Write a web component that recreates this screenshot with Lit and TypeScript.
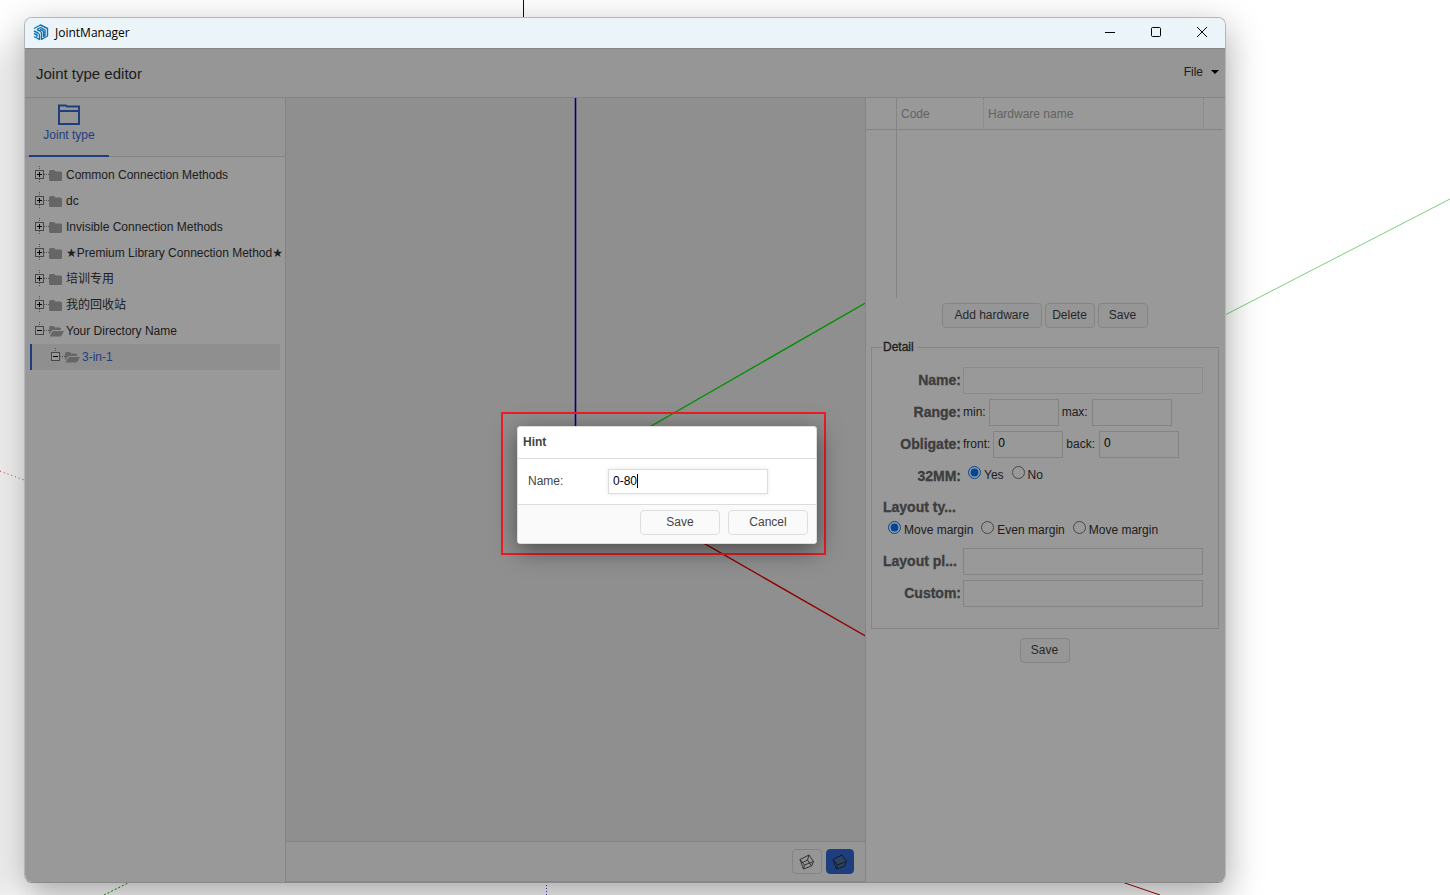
import { LitElement, html, css, svg } from "lit";
import { customElement, state, property } from "lit/decorators.js";

interface TreeNode {
  label: string;
  open?: boolean;
  depth?: number;
  selected?: boolean;
}

const TREE: TreeNode[] = [
  { label: "Common Connection Methods" },
  { label: "dc" },
  { label: "Invisible Connection Methods" },
  { label: "★Premium Library Connection Method★" },
  { label: "培训专用" },
  { label: "我的回收站" },
  { label: "Your Directory Name", open: true },
  { label: "3-in-1", open: true, depth: 1, selected: true },
];

const controls = css`
  * {
    box-sizing: border-box;
  }
  button,
  input {
    font: inherit;
    color: inherit;
    margin: 0;
  }
  .btn {
    height: 25px;
    padding: 0 12px;
    border: 1px solid #ddd;
    border-radius: 4px;
    background: #fafafa;
    color: #444;
    line-height: 22px;
    padding-bottom: 1px;
    white-space: nowrap;
  }
  .box {
    height: 27px;
    padding: 0 4px 2px;
    border: 1px solid #ddd;
    background: #fff;
    color: #000;
    outline: none;
    border-radius: 0;
    min-width: 0;
  }
`;

@customElement("joint-tree")
export class JointTree extends LitElement {
  static styles = [
    controls,
    css`
      :host {
        display: block;
        padding: 5px 5px 0;
      }
      .list {
        margin: 0;
        padding: 0;
        list-style: none;
      }
      .node {
        display: flex;
        align-items: center;
        width: 100%;
        height: 26px;
        padding: 0 0 0 4px;
        border: 0;
        background: none;
        color: #333;
        white-space: nowrap;
        text-align: left;
      }
      .nested {
        padding-left: 20px;
      }
      .selected {
        background: #eee;
        color: #3a6ad4;
        box-shadow: inset 2px 0 #3468d4;
      }
      .fork,
      .folder {
        flex: none;
        display: block;
        overflow: visible;
      }
      .folder {
        margin-right: 3px;
      }
    `,
  ];

  private fork(open: boolean, last: boolean) {
    return html`<svg class="fork" width="15" height="18" viewBox="0 0 15 18" shape-rendering="crispEdges" aria-hidden="true">
      <path d="M5.5 0v4M10 8.5h5" stroke="#888" stroke-dasharray="1 1" />
      ${last ? "" : svg`<path d="M5.5 13v4" stroke="#888" stroke-dasharray="1 1" />`}
      <rect x="1.5" y="4.5" width="8" height="8" fill="#fff" stroke="#777" />
      <path d="M3 8.5h5" stroke="#000" />
      ${open ? "" : svg`<path d="M5.5 6v5" stroke="#000" />`}
    </svg>`;
  }

  private folder(open: boolean) {
    return open
      ? html`<svg class="folder" width="14" height="16" viewBox="0 0 14 16" aria-hidden="true">
          <path d="M0 11.500V4.500Q0 3 1.500 3H4.500Q5.500 3 6 4.500H10.500Q12 4.500 12 6V7H4.500Q3 7 2 8.500Z" fill="#aaa" />
          <path d="M0.500 13.500L3 9Q3.500 8 4.500 8H14.500Q15 8 14.500 9L12.500 12.500Q12 13.500 11 13.500Z" fill="#aaa" />
        </svg>`
      : html`<svg class="folder" width="14" height="16" viewBox="0 0 14 16" aria-hidden="true">
          <path d="M0 4.500Q0 3 1.500 3H4.500Q6 3 6.500 4.500H11.500Q13 4.500 13 6V12.500Q13 14 11.500 14H1.500Q0 14 0 12.500Z" fill="#aaa" />
        </svg>`;
  }

  render() {
    return html`<ul class="list">
      ${TREE.map(
        (n) => html`<li>
          <button class="node ${n.depth ? "nested" : ""} ${n.selected ? "selected" : ""}">
            ${this.fork(!!n.open, !!n.open)}${this.folder(!!n.open)}<span>${n.label}</span>
          </button>
        </li>`
      )}
    </ul>`;
  }
}

@customElement("model-view")
export class ModelView extends LitElement {
  static styles = [
    controls,
    css`
      :host {
        display: flex;
        flex-direction: column;
        min-width: 0;
      }
      .scene {
        flex: 1;
        min-height: 0;
        width: 100%;
        background: #efefef;
        display: block;
      }
      .bar {
        display: flex;
        justify-content: flex-end;
        gap: 4px;
        height: 41px;
        padding: 7px 11px 0 0;
        border-top: 1px solid #ddd;
        border-bottom: 1px solid #ddd;
        background: #fafafa;
      }
      .tool {
        display: flex;
        align-items: center;
        justify-content: center;
        width: 30px;
        height: 25px;
        padding: 0;
        border: 1px solid #ddd;
        border-radius: 4px;
        background: #fafafa;
      }
      .active {
        width: 28px;
        border-color: #3468d4;
        background: #3468d4;
      }
    `,
  ];

  render() {
    return html`
      <svg class="scene" viewBox="-290 -372 580 744" preserveAspectRatio="xMidYMid slice" aria-label="Axes">
        <path d="M0 0L0 -800" stroke="#0000d0" stroke-width="1.600" />
        <path d="M0 0L700 -402" stroke="#00f000" stroke-width="1.400" />
        <path d="M0 0L700 402" stroke="#f00000" stroke-width="1.400" />
      </svg>
      <div class="bar">
        <button class="tool" aria-label="Wireframe">
          <svg width="16" height="16" viewBox="0 0 16 16" fill="none" stroke="#444" stroke-width="0.900" stroke-linejoin="round">
            <path d="M1 5.500L10 1L14.500 7.500L12.500 12L4.500 15Z M1 5.500L5.500 11L14.500 7.500M5.500 11L4.500 15M10 1L8.500 6L2.500 9M8.500 6L12.500 12" />
          </svg>
        </button>
        <button class="tool active" aria-label="Solid">
          <svg width="16" height="16" viewBox="0 0 16 16" fill="#4a7098" stroke="#1b2c50" stroke-linejoin="round">
            <path d="M1 5.500L10 1L14.500 7.500L12.500 12L4.500 15Z" />
            <path d="M4.500 15L5.500 11L14.500 7.500M5.500 11L1 5.500" fill="none" />
          </svg>
        </button>
      </div>
    `;
  }
}

@customElement("hardware-panel")
export class HardwarePanel extends LitElement {
  static styles = [
    controls,
    css`
      :host {
        display: block;
        border-left: 1px solid #ddd;
        background: #fff;
      }
      .grid {
        width: 100%;
        height: 200px;
        padding-right: 2px;
      }
      .table {
        width: 100%;
        height: 100%;
        border-collapse: separate;
        border-spacing: 0;
        table-layout: fixed;
      }
      .table th {
        height: 32px;
        padding: 0 4px;
        border-bottom: 1px solid #ddd;
        border-right: 1px dotted #ddd;
        color: #a6a6a6;
        font-weight: normal;
        text-align: left;
      }
      .table td {
        padding: 0;
      }
      .table .num {
        width: 31px;
        border-right: 1px solid #ddd;
      }
      .table .code {
        width: 87px;
      }
      .table .end {
        width: 19px;
        border-right: 0;
      }
      .actions {
        display: flex;
        justify-content: center;
        gap: 3px;
        padding: 5px 2px 0 0;
      }
      .small {
        width: 50px;
        padding-left: 0;
        padding-right: 0;
      }
      .wide {
        width: 100px;
      }
      .detail {
        margin: 11px 6px 0 5px;
        padding: 9px 15px 19px 11px;
        border: 1px solid #ddd;
        min-width: 0;
      }
      .legend {
        padding: 0 3px 0 1px;
        color: #333;
        font-size: 12px;
        line-height: 16px;
        -webkit-text-stroke: 0.3px #333;
        margin-left: -1px;
      }
      .row {
        display: flex;
        align-items: center;
        height: 32px;
        color: #333;
      }
      .name {
        width: 80px;
        flex: none;
        padding-right: 2px;
        text-align: right;
        font-weight: bold;
        font-size: 14px;
        color: #666;
        -webkit-text-stroke: 0.3px #666;
        white-space: nowrap;
      }
      .cut {
        text-align: left;
      }
      .fill {
        flex: 1;
      }
      .faint {
        border-color: #e8e8e8;
      }
      .a {
        width: 70px;
        margin: 0 3px;
      }
      .b {
        width: 80px;
        margin-left: 4px;
      }
      .options {
        display: flex;
        gap: 8px;
        padding: 0 0 4px 5px;
      }
      .under {
        height: 24px;
        align-items: flex-start;
      }
      .options label {
        display: flex;
        gap: 3px;
        align-items: flex-start;
        line-height: 16px;
        white-space: nowrap;
      }
      .options span {
        padding-top: 1px;
      }
      .radio {
        width: 13px;
        height: 13px;
        accent-color: #0075ff;
      }
      .title {
        height: 29px;
      }
      .foot {
        padding-top: 9px;
      }
    `,
  ];

  render() {
    return html`
      <div class="grid">
        <table class="table">
          <thead>
            <tr>
              <th class="num" aria-label="Number"></th>
              <th class="code">Code</th>
              <th>Hardware name</th>
              <th class="end" aria-label="More"></th>
            </tr>
          </thead>
          <tbody>
            <tr>
              <td class="num"></td>
              <td></td>
              <td></td>
              <td></td>
            </tr>
          </tbody>
        </table>
      </div>
      <div class="actions">
        <button class="btn wide">Add hardware</button>
        <button class="btn small">Delete</button>
        <button class="btn small">Save</button>
      </div>
      <fieldset class="detail">
        <legend class="legend">Detail</legend>
        <div class="row">
          <label class="name" for="name">Name:</label>
          <input id="name" class="box fill faint" />
        </div>
        <div class="row">
          <span class="name">Range:</span>
          <label for="min">min:</label><input id="min" class="box a" />
          <label for="max">max:</label><input id="max" class="box b" />
        </div>
        <div class="row">
          <span class="name">Obligate:</span>
          <label for="front">front:</label><input id="front" class="box a" value="0" />
          <label for="back">back:</label><input id="back" class="box b" value="0" />
        </div>
        <div class="row">
          <span class="name">32MM:</span>
          <div class="options">
            <label><input class="radio" type="radio" name="mm" checked /><span>Yes</span></label>
            <label><input class="radio" type="radio" name="mm" /><span>No</span></label>
          </div>
        </div>
        <div class="row title"><span class="name cut">Layout ty...</span></div>
        <div class="row under">
          <div class="options">
            <label><input class="radio" type="radio" name="layout" checked /><span>Move margin</span></label>
            <label><input class="radio" type="radio" name="layout" /><span>Even margin</span></label>
            <label><input class="radio" type="radio" name="layout" /><span>Move margin</span></label>
          </div>
        </div>
        <div class="row">
          <label class="name cut" for="plan">Layout pl...</label>
          <input id="plan" class="box fill" />
        </div>
        <div class="row">
          <label class="name" for="custom">Custom:</label>
          <input id="custom" class="box fill" />
        </div>
      </fieldset>
      <div class="actions foot"><button class="btn small">Save</button></div>
    `;
  }
}

@customElement("hint-dialog")
export class HintDialog extends LitElement {
  @property() value = "";

  static styles = [
    controls,
    css`
      :host {
        display: block;
      }
      .dialog {
        width: 300px;
        border: 1px solid #ddd;
        border-radius: 3px;
        background: #fff;
        box-shadow: 1px 6px 24px rgba(0, 0, 0, 0.5);
        overflow: hidden;
        color: #444;
      }
      .title {
        margin: 0;
        height: 32px;
        padding-left: 5px;
        border-bottom: 1px solid #ddd;
        font-size: 12px;
        font-weight: bold;
        line-height: 30px;
      }
      .body {
        display: flex;
        align-items: center;
        height: 45px;
        padding-left: 10px;
      }
      .body label {
        width: 80px;
        padding-bottom: 2px;
      }
      .field {
        position: relative;
        display: flex;
      }
      .caret {
        position: absolute;
        left: 29px;
        top: 5px;
        width: 1px;
        height: 14px;
        background: #000;
      }
      .entry {
        width: 160px;
        height: 25px;
        box-shadow: 0 0 4px rgba(0, 0, 0, 0.1);
        caret-color: transparent;
      }
      .foot {
        display: flex;
        justify-content: flex-end;
        gap: 8px;
        height: 39px;
        padding: 5px 8px 0 0;
        border-top: 1px solid #ddd;
        background: #fafafa;
      }
      .foot .btn {
        width: 80px;
      }
    `,
  ];

  render() {
    return html`<section class="dialog" role="dialog" aria-labelledby="t">
      <h2 class="title" id="t">Hint</h2>
      <div class="body">
        <label for="v">Name:</label>
        <div class="field">
          <input id="v" class="box entry" .value=${this.value} />
          <span class="caret"></span>
        </div>
      </div>
      <div class="foot">
        <button class="btn">Save</button>
        <button class="btn">Cancel</button>
      </div>
    </section>`;
  }
}

@customElement("app-root")
export class AppRoot extends LitElement {
  @state() private draft = "0-80";

  static styles = [
    controls,
    css`
      :host {
        display: block;
        font: 12px/16px "Liberation Sans", "DejaVu Sans", "Noto Sans CJK SC", Arial, sans-serif;
        color: #333;
      }
      .desktop {
        position: relative;
        display: flex;
        height: 100vh;
        padding: 17px 224px 12px 24px;
        overflow: hidden;
        background: #fff;
      }
      .backdrop {
        position: absolute;
        inset: 0;
        width: 100%;
        height: 100%;
      }
      .neighbour {
        position: absolute;
        left: -20px;
        top: 50px;
        bottom: -20px;
        width: 20px;
        box-shadow: 0 0 30px rgba(0, 0, 0, 0.15);
      }
      .window {
        position: relative;
        flex: 1;
        min-width: 0;
        display: flex;
        flex-direction: column;
        border: 1px solid #b4b6b8;
        border-bottom-color: #8a8a8a;
        border-radius: 8px;
        overflow: hidden;
        background: #fff;
        box-shadow: 0 12px 36px rgba(0, 0, 0, 0.36);
      }
      .titlebar {
        display: flex;
        align-items: center;
        height: 30px;
        padding: 0 17px 0 8px;
        background: #ebf4f8;
        color: #000;
        font-family: "Open Sans", "Noto Sans", sans-serif;
      }
      .logo {
        margin-bottom: 2px;
      }
      .titlebar h1 {
        flex: 1;
        margin: 0 0 0 6px;
        font-size: 12px;
        font-weight: normal;
      }
      .ctl {
        display: flex;
        width: 12px;
        height: 12px;
        padding: 0;
        border: 0;
        background: none;
        margin: 0 0 2px 34px;
      }
      .app {
        position: relative;
        flex: 1;
        min-height: 0;
        display: flex;
        flex-direction: column;
      }
      .header {
        display: flex;
        align-items: center;
        justify-content: space-between;
        height: 50px;
        padding: 0 6px 0 11px;
        border: 1px solid #ddd;
        border-width: 1px 0;
        background: #fafafa;
      }
      .header h2 {
        margin: 2px 0 0;
        font-size: 15px;
        font-weight: normal;
      }
      .file {
        display: flex;
        align-items: center;
        gap: 8px;
        padding: 0 0 3px;
        border: 0;
        background: none;
      }
      .columns {
        flex: 1;
        min-height: 0;
        display: grid;
        grid-template-columns: 261px minmax(0, 1fr) 360px;
      }
      .side {
        border-right: 1px solid #ddd;
        background: #fff;
        min-width: 0;
      }
      .tabs {
        height: 59px;
        padding-left: 4px;
        border-bottom: 1px solid #ddd;
        background: #fafafa;
      }
      .tab {
        display: flex;
        flex-direction: column;
        align-items: center;
        gap: 2px;
        width: 80px;
        height: 59px;
        padding: 6px 0 0;
        border: 0;
        border-bottom: 2px solid #3468d4;
        background: none;
        color: #3a6ad4;
      }
      .mask {
        position: absolute;
        inset: 0;
        background: rgba(0, 0, 0, 0.4);
      }
      .frame {
        position: absolute;
        left: 476px;
        top: 364px;
        padding: 12px 7px 9px 14px;
        border: 2px solid #ed1c24;
      }
    `,
  ];

  render() {
    return html`
      <div class="desktop">
        <div class="neighbour"></div>
        <svg class="backdrop" viewBox="0 0 1450 895" preserveAspectRatio="none" aria-hidden="true">
          <path d="M523.500 0V17" stroke="#00008c" />
          <path d="M1225 315L1450 199" stroke="#7ccf7c" />
          <path d="M1122 882L1160 895" stroke="#a00" />
          <path d="M0 471L24 480" stroke="#e03030" stroke-dasharray="1 3" />
          <path d="M104 895L130 882" stroke="#080" stroke-dasharray="2 2" />
          <path d="M546.500 882V895" stroke="#33c" stroke-dasharray="1 2" />
        </svg>
        <main class="window">
          <div class="titlebar">
            <svg class="logo" width="16" height="17" viewBox="0 0 16 17" fill="none" stroke="#1173b0" stroke-width="1.400" stroke-linejoin="round" aria-hidden="true">
              <path d="M1 4.500L7.500 1L14.500 4.500V12L8.500 15.500V9.500Q8.500 8 7 7L4 5.500" />
              <path d="M4 5.500L7.500 3.500L12 6V11.500L10.500 12.500V8Q10.500 7 9.500 6.500L7 5.500" />
              <path d="M1 7L5 9Q6.500 10 6.500 11.500V15.500L1 12.500M1 9.500L4 11V13" />
            </svg>
            <h1>JointManager</h1>
            <button class="ctl" aria-label="Minimize"><svg width="12" height="12" fill="none" stroke="#000"><path d="M1 6.500h10" /></svg></button>
            <button class="ctl" aria-label="Maximize"><svg width="12" height="12" fill="none" stroke="#000"><rect x="1.500" y="1.500" width="9" height="9" rx="1" /></svg></button>
            <button class="ctl" aria-label="Close"><svg width="12" height="12" fill="none" stroke="#000"><path d="M1 1l10 10M11 1L1 11" /></svg></button>
          </div>
          <div class="app">
            <header class="header">
              <h2>Joint type editor</h2>
              <button class="file">File<svg width="8" height="4" viewBox="0 0 8 4"><path d="M0 0h8L4 4Z" fill="#000" /></svg></button>
            </header>
            <div class="columns">
              <aside class="side">
                <div class="tabs">
                  <button class="tab">
                    <svg width="22" height="21" viewBox="0 0 22 21" fill="none" stroke="#3468d4" stroke-width="2" aria-hidden="true">
                      <path d="M1 1.500H8L9 2.500H21V20H1ZM1 7H21" />
                    </svg>
                    Joint type
                  </button>
                </div>
                <joint-tree></joint-tree>
              </aside>
              <model-view></model-view>
              <hardware-panel></hardware-panel>
            </div>
            <div class="mask">
              <div class="frame"><hint-dialog .value=${this.draft}></hint-dialog></div>
            </div>
          </div>
        </main>
      </div>
    `;
  }
}
